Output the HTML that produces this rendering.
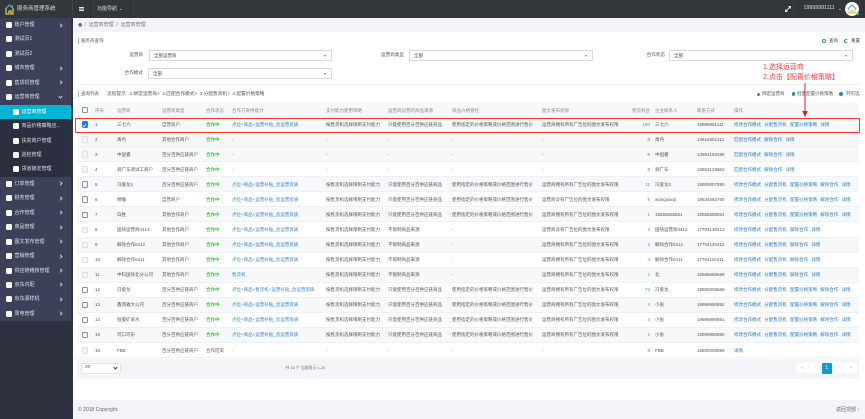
<!DOCTYPE html>
<html lang="zh"><head><meta charset="utf-8"><title>服务商管理系统</title>
<style>
*{box-sizing:border-box}
html,body{margin:0;padding:0;width:865px;height:419px;overflow:hidden;background:#fff}
#p{position:relative;width:865px;height:419px;overflow:hidden;font:4.5px/1 "Liberation Sans","Noto Sans CJK SC",sans-serif;color:#555;background:#fff;filter:blur(.25px)}
#p div,#p span,#p i,#p b,#p a{position:absolute;white-space:nowrap}
#p b,#p i{font-weight:normal;font-style:normal}
.s{left:0;width:71px;height:14.5px;background:#3c4159;color:#dfe1e7;font-size:5px;line-height:14.5px}
.s.sub{background:#2b2f3f}
.s.on{background:#00b4d6;color:#fff}
.s i{left:6px;top:4px;width:6px;height:6px;background:#fff;border-radius:1.5px}
.s.sub i{left:13px}
.s b{left:14.5px;top:0}
.s.sub b{left:21.5px}
.s u{position:absolute;left:59px;top:5.5px;width:3px;height:3px;border:solid #c4c7d0;border-width:.7px .7px 0 0;transform:rotate(45deg)}
.s u.d{transform:rotate(135deg);top:4.5px}
.lb{color:#555;text-align:right;font-size:4.6px}
.sel{background:#fff;border:.7px solid #d6d9de;height:11px;padding:0}
.sel b{left:4px;top:3.2px;color:#444}
.sel u{position:absolute;right:5px;top:4px;border:1.4px solid transparent;border-top:2px solid #777;border-bottom:0}
.r{left:77px;width:782px;height:15.07px;background:#fff;border-bottom:.7px solid #eef0f3;line-height:14px}
.r.g{background:#f6f8fa}
.r b,.r a{top:.5px}
.r .cb{left:4.5px;top:4.2px;width:6.4px;height:6.4px;border:.7px solid #8b8f94;background:#fff;border-radius:1.2px}
.r .cb.l{border-color:#dfe1e4;background:#f5f5f5}
.c0{left:18px}.c1{left:40px}.c2{left:85px}
#p b.c3{left:129px;color:#35cf35;font-weight:bold}
#p b.c3.e{color:#666;font-weight:normal}
.c4{left:155px;color:#3a82c6}.c5{left:249px}.c6{left:311px}.c7{left:375px}.c8{left:465px}
.c9{right:209px;color:#4a90c8;text-align:right;width:20px}
.c9.z{color:#666}
.c10{left:578px}.c11{left:620px}
.ops{left:657px;color:#2f7cbf;display:block}
.ops span{position:static!important;margin-right:3.3px}
.h{color:#888}
</style></head><body><div id="p">

<!-- top bar -->
<div style="left:0;top:0;width:865px;height:18px;background:#33373c"></div>
<svg style="position:absolute;left:3.5px;top:3.5px" width="11" height="11" viewBox="0 0 11 11"><path d="M1 5.5L5.5 1 10 5.5" fill="none" stroke="#3f9fd8" stroke-width="1.4"/><path d="M2 5v5h3V7h2v3h2V5" fill="none" stroke="#d8c83c" stroke-width="1.3"/><rect x="7.8" y="1.2" width="1.2" height="3" fill="#5cb85c"/></svg>
<div style="left:17px;top:6.5px;font-size:5.5px;color:#d8dadd">服务商管理系统</div>
<div style="left:72px;top:0;width:.7px;height:18px;background:#40454a"></div>
<div style="left:90px;top:0;width:.7px;height:18px;background:#2a2d31"></div>
<div style="left:79px;top:7px;width:5px;height:4.4px;border:solid #e0e2e5;border-width:1px 0;background:linear-gradient(#33373c 30%,#e0e2e5 30%,#e0e2e5 70%,#33373c 70%)"></div>
<div style="left:97px;top:6.7px;font-size:5px;color:#dcdee0">功能导航</div>
<div style="left:120px;top:8.5px;border:1.1px solid transparent;border-top:1.5px solid #ddd;border-bottom:0"></div>
<div style="left:130px;top:0;width:.7px;height:18px;background:#2a2d31"></div>
<svg style="position:absolute;left:785px;top:6px" width="6" height="6" viewBox="0 0 6 6"><path d="M.5 5.5L5.5 .5M3.4 .5h2.1v2.1M.5 3.4v2.1h2.1" fill="none" stroke="#e5e5e5" stroke-width=".9"/></svg>
<div style="left:798px;top:0;width:.7px;height:18px;background:#2a2d31"></div>
<div style="left:803.5px;top:6.4px;font-size:5.3px;color:#dfe1e3">19999991111</div>
<div style="left:839px;top:8.5px;border:1.1px solid transparent;border-top:1.5px solid #ddd;border-bottom:0"></div>
<div style="left:845px;top:2px;width:14px;height:14px;border-radius:50%;background:#f4f8f8"></div>
<svg style="position:absolute;left:847px;top:4px" width="10" height="10" viewBox="0 0 10 10"><path d="M.8 5L5 1l4.2 4" fill="none" stroke="#3f9fd8" stroke-width="1"/><path d="M2 5v4h2.4V6.6h1.4V9H8V5" fill="none" stroke="#d8c83c" stroke-width=".9"/></svg>
<div style="left:856px;top:12.5px;width:2.8px;height:2.8px;border-radius:50%;background:#4cc552"></div>

<!-- sidebar -->
<div style="left:0;top:18px;width:72.5px;height:401px;background:#2e3240"></div>
<div class="s" style="top:18px"><i></i><b>账户管理</b><u></u></div>
<div class="s" style="top:32.4px"><i></i><b>测试页1</b></div>
<div class="s" style="top:46.8px"><i></i><b>测试页2</b></div>
<div class="s" style="top:61.3px"><i></i><b>城市管理</b><u></u></div>
<div class="s" style="top:75.7px"><i></i><b>售货机管理</b><u></u></div>
<div class="s" style="top:90.2px"><i></i><b>运营商管理</b><u class="d"></u></div>
<div class="s sub on" style="top:104.6px"><i></i><b>运营商管理</b></div>
<div class="s sub" style="top:119px"><i></i><b>商品价格策略应...</b></div>
<div class="s sub" style="top:133.5px"><i></i><b>扶贫商户管理</b></div>
<div class="s sub" style="top:147.9px"><i></i><b>巡检管理</b></div>
<div class="s sub" style="top:162.4px"><i></i><b>货道锁定管理</b></div>
<div class="s" style="top:176.8px"><i></i><b>订单管理</b><u></u></div>
<div class="s" style="top:191.3px"><i></i><b>财务管理</b><u></u></div>
<div class="s" style="top:205.7px"><i></i><b>合作管理</b><u></u></div>
<div class="s" style="top:220.1px"><i></i><b>商品管理</b><u></u></div>
<div class="s" style="top:234.6px"><i></i><b>图文发布管理</b><u></u></div>
<div class="s" style="top:249px"><i></i><b>营销管理</b><u></u></div>
<div class="s" style="top:263.5px"><i></i><b>供应链稽核管理</b><u></u></div>
<div class="s" style="top:277.9px"><i></i><b>京东内配</b><u></u></div>
<div class="s" style="top:292.4px"><i></i><b>京东源样机</b><u></u></div>
<div class="s" style="top:306.8px"><i></i><b>周电管理</b><u></u></div>

<!-- breadcrumb -->
<div style="left:72.5px;top:18px;width:793px;height:14px;background:#f2f4f9"></div>
<div style="left:78px;top:22.5px;width:4.4px;height:4px;background:#666;clip-path:polygon(50% 0,100% 50%,85% 50%,85% 100%,15% 100%,15% 50%,0 50%)"></div>
<div style="left:84.5px;top:22.5px;color:#777;font-size:5px">/ &nbsp;运营商管理 &nbsp;/ &nbsp;运营商管理</div>

<!-- search -->
<div style="left:77.5px;top:38px;width:.9px;height:6px;background:#7ec3e6"></div>
<div style="left:81px;top:39px">服务商查询</div>
<div class="lb" style="left:120px;width:23px;top:52.5px">运营商</div>
<div class="sel" style="left:149px;top:50px;width:183px"><b>全部运营商</b><u></u></div>
<div class="lb" style="left:375px;width:29px;top:52.5px">运营商类型</div>
<div class="sel" style="left:409px;top:50px;width:184px"><b>全部</b><u></u></div>
<div class="lb" style="left:640px;width:25px;top:52.5px">合作状态</div>
<div class="sel" style="left:669px;top:50px;width:184px"><b>全部</b><u></u></div>
<div class="lb" style="left:120px;width:23px;top:70.5px">合作模式</div>
<div class="sel" style="left:148px;top:67.5px;width:184px"><b>全部</b><u></u></div>
<div style="left:821.5px;top:38.5px;width:4px;height:4px;border:.9px solid #2f8fc4;border-radius:50%"></div>
<div style="left:829px;top:39px;color:#444">查询</div>
<div style="left:844px;top:38.5px;width:4px;height:4px;border:.9px solid #2f8fc4;border-radius:50%;border-right-color:transparent"></div>
<div style="left:851px;top:39px;color:#444">重置</div>

<div style="left:77px;top:84px;width:782px;height:.8px;background:#eceef1"></div>

<!-- list head -->
<div style="left:77.5px;top:91px;width:.9px;height:6px;background:#7ec3e6"></div>
<div style="left:81px;top:92px">查询列表</div>
<div style="left:107px;top:92px;font-size:4.7px">流程提示: &nbsp;1.绑定运营商&gt; &nbsp;2.匹配合作模式&gt; &nbsp;3.分配售货机&gt; &nbsp;4.配置价格策略</div>
<div style="left:757px;top:92.5px;width:3.2px;height:3.2px;background:#1b8ec9;border-radius:50%"></div>
<div style="left:762px;top:92px">绑定运营商</div>
<div style="left:791.5px;top:92px;width:3.6px;height:3.6px;background:#1b8ec9;border-radius:50%"></div>
<div style="left:797px;top:92px">批量配置价格策略</div>
<div style="left:839px;top:92px;width:3.6px;height:3.6px;background:#1b8ec9;border-radius:50%"></div>
<div style="left:846px;top:92px">列可选</div>

<!-- table header -->
<div class="r g h" style="top:103px;height:14px"><i class="cb" style="top:3.6px"></i><b class="c0">序号</b><b class="c1">运营商</b><b class="c2">运营商类型</b><b class="c3" style="color:#888;font-weight:normal">合作状态</b><b class="c4" style="color:#888">合作方商供能力</b><b class="c5">支付能力使用策略</b><b class="c6">运营商运营的商品来源</b><b class="c7">商品价格管控</b><b class="c8">图文发布权限</b><b class="c9" style="color:#888">售货机台</b><b class="c10">企业联系人</b><b class="c11">联系方式</b><b style="left:657px">操作</b></div>

<!-- rows -->
<div class="r g" style="top:117px"><i class="cb" style="background:#1e7fe0;border-color:#1e7fe0"></i><b class="c0">1</b><b class="c1">三七六</b><b class="c2">自营商户</b><b class="c3">合作中</b><a class="c4">点位+商品+运营补贴_含运营资质</a><b class="c5">按售货机选择限制支付能力</b><b class="c6">只能使用百分百供应链商品</b><b class="c7">使用指定的价格策略或价格范围进行售价</b><b class="c8">运营商拥有所有广告位的图文发布权限</b><b class="c9">190</b><b class="c10">三七六</b><b class="c11">19999991111</b><a class="ops"><span>修改合作模式</span><span>分配售货机</span><span>配置价格策略</span><span>详情</span></a></div>

<div class="r" style="top:132.1px;background:#f6f6f6"><i class="cb l"></i><b class="c0">2</b><b class="c1">禹冉</b><b class="c2">其他合作商户</b><b class="c3">合作中</b><a class="c4" style="color:#777">-</a><b class="c5">-</b><b class="c6">-</b><b class="c7">-</b><b class="c8">-</b><b class="c9 z">0</b><b class="c10">禹冉</b><b class="c11">13616301211</b><a class="ops"><span>匹配合作模式</span><span>解除合作</span><span>详情</span></a></div>

<div class="r g" style="top:147.1px"><i class="cb l"></i><b class="c0">3</b><b class="c1">中国睿</b><b class="c2">百分百供应链商户</b><b class="c3">合作中</b><a class="c4" style="color:#777">-</a><b class="c5">-</b><b class="c6">-</b><b class="c7">-</b><b class="c8">-</b><b class="c9 z">0</b><b class="c10">中国睿</b><b class="c11">13563183286</b><a class="ops"><span>匹配合作模式</span><span>解除合作</span><span>详情</span></a></div>

<div class="r" style="top:162.2px"><i class="cb l"></i><b class="c0">4</b><b class="c1">调广东测试工商户</b><b class="c2">百分百供应链商户</b><b class="c3">合作中</b><a class="c4" style="color:#777">-</a><b class="c5">-</b><b class="c6">-</b><b class="c7">-</b><b class="c8">-</b><b class="c9 z">0</b><b class="c10">调广东</b><b class="c11">18963129962</b><a class="ops"><span>匹配合作模式</span><span>解除合作</span><span>详情</span></a></div>

<div class="r g" style="top:177.3px"><i class="cb"></i><b class="c0">5</b><b class="c1">冯俊龙2</b><b class="c2">百分百供应链商户</b><b class="c3">合作中</b><a class="c4">点位+商品+运营补贴_含运营资质</a><b class="c5">按售货机选择限制支付能力</b><b class="c6">只能使用百分百供应链商品</b><b class="c7">使用指定的价格策略或价格范围进行售价</b><b class="c8">运营商拥有所有广告位的图文发布权限</b><b class="c9">11</b><b class="c10">冯俊龙2</b><b class="c11">19900007890</b><a class="ops"><span>修改合作模式</span><span>分配售货机</span><span>配置价格策略</span><span>解除合作</span><span>详情</span></a></div>

<div class="r" style="top:192.3px"><i class="cb"></i><b class="c0">6</b><b class="c1">俐懂</b><b class="c2">自营商户</b><b class="c3">合作中</b><a class="c4">点位+商品+运营补贴_含运营资质</a><b class="c5">按售货机选择限制支付能力</b><b class="c6">只能使用百分百供应链商品</b><b class="c7">使用指定的价格策略或价格范围进行售价</b><b class="c8">运营商没有广告位的图文发布权限</b><b class="c9">8</b><b class="c10">wangxiaoji</b><b class="c11">18834562760</b><a class="ops"><span>修改合作模式</span><span>分配售货机</span><span>配置价格策略</span><span>解除合作</span><span>详情</span></a></div>

<div class="r g" style="top:207.4px"><i class="cb"></i><b class="c0">7</b><b class="c1">白胜</b><b class="c2">其他合作商户</b><b class="c3">合作中</b><a class="c4">点位+商品+运营补贴_含运营资质</a><b class="c5">按售货机选择限制支付能力</b><b class="c6">只能使用百分百供应链商品</b><b class="c7">使用指定的价格策略或价格范围进行售价</b><b class="c8">运营商拥有所有广告位的图文发布权限</b><b class="c9">1</b><b class="c10">15555555551</b><b class="c11">15555555551</b><a class="ops"><span>修改合作模式</span><span>分配售货机</span><span>配置价格策略</span><span>解除合作</span><span>详情</span></a></div>

<div class="r" style="top:222.5px"><i class="cb l"></i><b class="c0">8</b><b class="c1">国快运营商0413</b><b class="c2">其他合作商户</b><b class="c3">合作中</b><a class="c4">点位+商品+运营补贴_含运营资质</a><b class="c5">按售货机选择限制支付能力</b><b class="c6">不限制商品来源</b><b class="c7">-</b><b class="c8">运营商没有广告位的图文发布权限</b><b class="c9">3</b><b class="c10">国快运营商0413</b><b class="c11">17704130413</b><a class="ops"><span>修改合作模式</span><span>分配售货机</span><span>解除合作</span><span>详情</span></a></div>

<div class="r g" style="top:237.5px"><i class="cb l"></i><b class="c0">9</b><b class="c1">解除合作0412</b><b class="c2">其他合作商户</b><b class="c3">合作中</b><a class="c4">点位+商品+运营补贴_含运营资质</a><b class="c5">按售货机选择限制支付能力</b><b class="c6">不限制商品来源</b><b class="c7">-</b><b class="c8">运营商拥有所有广告位的图文发布权限</b><b class="c9">2</b><b class="c10">解除合作0412</b><b class="c11">17704120412</b><a class="ops"><span>修改合作模式</span><span>分配售货机</span><span>解除合作</span><span>详情</span></a></div>

<div class="r" style="top:252.6px"><i class="cb l"></i><b class="c0">10</b><b class="c1">解除合作0411</b><b class="c2">其他合作商户</b><b class="c3">合作中</b><a class="c4">点位+商品+运营补贴_含运营资质</a><b class="c5">按售货机选择限制支付能力</b><b class="c6">不限制商品来源</b><b class="c7">-</b><b class="c8">运营商拥有所有广告位的图文发布权限</b><b class="c9">3</b><b class="c10">解除合作0411</b><b class="c11">17704110411</b><a class="ops"><span>修改合作模式</span><span>分配售货机</span><span>解除合作</span><span>详情</span></a></div>

<div class="r g" style="top:267.7px"><i class="cb l"></i><b class="c0">11</b><b class="c1">中科国快北分公司</b><b class="c2">其他合作商户</b><b class="c3">合作中</b><a class="c4">售货机</a><b class="c5">按售货机选择限制支付能力</b><b class="c6">不限制商品来源</b><b class="c7">-</b><b class="c8">运营商拥有所有广告位的图文发布权限</b><b class="c9">2</b><b class="c10">北</b><b class="c11">16666666699</b><a class="ops"><span>修改合作模式</span><span>分配售货机</span><span>解除合作</span><span>详情</span></a></div>

<div class="r" style="top:282.7px"><i class="cb"></i><b class="c0">12</b><b class="c1">冯俊龙</b><b class="c2">百分百供应链商户</b><b class="c3">合作中</b><a class="c4">点位+商品+售货机+运营补贴_含运营资质</a><b class="c5">按售货机选择限制支付能力</b><b class="c6">只能使用百分百供应链商品</b><b class="c7">使用指定的价格策略或价格范围进行售价</b><b class="c8">运营商拥有所有广告位的图文发布权限</b><b class="c9">73</b><b class="c10">冯俊龙</b><b class="c11">19900006666</b><a class="ops"><span>修改合作模式</span><span>分配售货机</span><span>配置价格策略</span><span>解除合作</span><span>详情</span></a></div>

<div class="r g" style="top:297.8px"><i class="cb"></i><b class="c0">13</b><b class="c1">鑫而雅大公司</b><b class="c2">百分百供应链商户</b><b class="c3">合作中</b><a class="c4">点位+商品+运营补贴_含运营资质</a><b class="c5">按售货机选择限制支付能力</b><b class="c6">只能使用百分百供应链商品</b><b class="c7">使用指定的价格策略或价格范围进行售价</b><b class="c8">运营商拥有所有广告位的图文发布权限</b><b class="c9">4</b><b class="c10">小张</b><b class="c11">19999990892</b><a class="ops"><span>修改合作模式</span><span>分配售货机</span><span>配置价格策略</span><span>解除合作</span><span>详情</span></a></div>

<div class="r" style="top:312.9px"><i class="cb"></i><b class="c0">14</b><b class="c1">恒俊矿泉水</b><b class="c2">百分百供应链商户</b><b class="c3">合作中</b><a class="c4">点位+商品+运营补贴_含运营资质</a><b class="c5">按售货机选择限制支付能力</b><b class="c6">只能使用百分百供应链商品</b><b class="c7">使用指定的价格策略或价格范围进行售价</b><b class="c8">运营商拥有所有广告位的图文发布权限</b><b class="c9">4</b><b class="c10">小张</b><b class="c11">19999990891</b><a class="ops"><span>修改合作模式</span><span>分配售货机</span><span>配置价格策略</span><span>解除合作</span><span>详情</span></a></div>

<div class="r g" style="top:327.9px"><i class="cb"></i><b class="c0">15</b><b class="c1">可口可乐</b><b class="c2">百分百供应链商户</b><b class="c3">合作中</b><a class="c4">点位+商品+运营补贴_含运营资质</a><b class="c5">按售货机选择限制支付能力</b><b class="c6">只能使用百分百供应链商品</b><b class="c7">使用指定的价格策略或价格范围进行售价</b><b class="c8">运营商拥有所有广告位的图文发布权限</b><b class="c9">2</b><b class="c10">小张</b><b class="c11">19999990890</b><a class="ops"><span>修改合作模式</span><span>分配售货机</span><span>配置价格策略</span><span>解除合作</span><span>详情</span></a></div>

<div class="r" style="top:343px"><i class="cb l"></i><b class="c0">16</b><b class="c1">FBB</b><b class="c2">百分百供应链商户</b><b class="c3 e">合作结束</b><a class="c4" style="color:#777">-</a><b class="c5">-</b><b class="c6">-</b><b class="c7">-</b><b class="c8">-</b><b class="c9 z">0</b><b class="c10">FBB</b><b class="c11">16600009999</b><a class="ops"><span>详情</span></a></div>

<!-- row 1 check mark -->
<svg style="position:absolute;left:82px;top:122.5px" width="5" height="5" viewBox="0 0 5 5"><path d="M1 2.6l1.1 1.1L4 1.3" fill="none" stroke="#fff" stroke-width=".8"/></svg>

<!-- table footer -->
<div style="left:77px;top:358.5px;width:782px;height:20px;background:#f3f5f8"></div>
<div style="left:81px;top:362.5px;width:40px;height:11.5px;background:#fff;border:.7px solid #e2e4e8;border-radius:1.5px"></div>
<div style="left:85px;top:365.5px;font-size:4.8px">20</div>
<div style="left:113.5px;top:366px;width:3px;height:3px;border:solid #444;border-width:0 1px 1px 0;transform:rotate(45deg)"></div>
<div style="left:285.5px;top:365.5px;font-size:3.9px;color:#666">共 16 个 当前显示 1-20</div>
<div style="left:796px;top:363px;width:13px;height:10px;background:#fff;border-radius:1px;color:#aaa;text-align:center;line-height:10px">«</div>
<div style="left:810px;top:363px;width:10px;height:10px;background:#fff;border-radius:1px;color:#aaa;text-align:center;line-height:10px">‹</div>
<div style="left:821.5px;top:363px;width:10.5px;height:10.5px;background:#0e9cd1;border-radius:1px;color:#fff;text-align:center;line-height:10.5px;font-size:5px">1</div>
<div style="left:833px;top:363px;width:10px;height:10px;background:#fff;border-radius:1px;color:#aaa;text-align:center;line-height:10px">›</div>
<div style="left:844px;top:363px;width:13px;height:10px;background:#fff;border-radius:1px;color:#aaa;text-align:center;line-height:10px">»</div>

<!-- page footer -->
<div style="left:72.5px;top:400px;width:793px;height:19px;background:#f3f4f8"></div>
<div style="left:78px;top:407.5px;font-size:5px;color:#666">© 2018 Copyright.</div>
<div style="left:836px;top:407.5px;font-size:5px;color:#666">返回顶部 ↑</div>

<!-- annotations -->
<div style="left:74.5px;top:117.5px;width:785.5px;height:15px;border:1px solid #f03a32;border-radius:1px"></div>
<div style="left:763px;top:63.5px;font-size:7px;color:#f5443c">1.选择运营商</div>
<div style="left:763px;top:73.5px;font-size:7px;color:#f5443c">2.点击【配置价格策略】</div>
<svg style="position:absolute;left:801px;top:82px" width="8" height="36" viewBox="0 0 8 36"><path d="M4 1v30" stroke="#d5261e" stroke-width="1"/><path d="M1.2 29L4 35 6.8 29z" fill="#d5261e"/></svg>
</div></body></html>
